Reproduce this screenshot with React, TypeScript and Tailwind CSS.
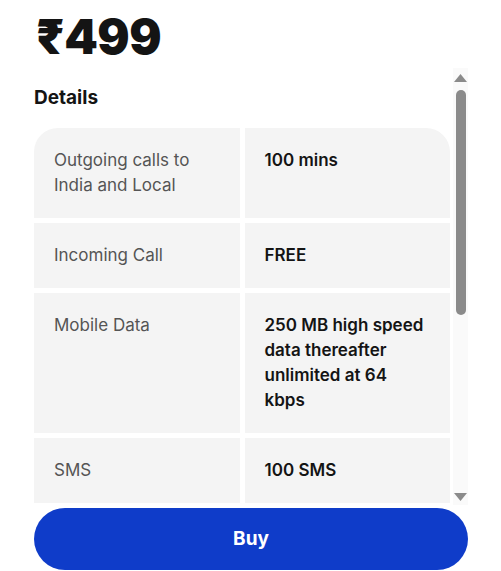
import React from 'react';

type Row = { label: string; value: string };

const ROWS: Row[] = [
  { label: 'Outgoing calls to India and Local', value: '100 mins' },
  { label: 'Incoming Call', value: 'FREE' },
  { label: 'Mobile Data', value: '250 MB high speed data thereafter unlimited at 64 kbps' },
  { label: 'SMS', value: '100 SMS' },
];

const App: React.FC = () => {
  return (
    <div
      className="w-[501px] h-[571px] bg-white flex flex-col pl-[34px] pr-[33px] overflow-hidden"
      style={{ fontFamily: 'Inter, "Noto Sans", "DejaVu Sans", sans-serif' }}
    >
      <div className="mt-[13px] pl-[2px] text-[48px] leading-[48px] font-black text-[#141414] tracking-[-0.5px]">
        ₹499
      </div>

      <div className="mt-[7px] h-[437px] flex">
        <div className="flex-1 overflow-hidden pr-[3px]">
          <div className="pt-[16px]">
            <h3 className="text-[19px] leading-[28px] font-bold text-[#141414] mb-[16px]">Details</h3>
            <div className="grid grid-cols-2 gap-[5px]">
              {ROWS.map((r, i) => (
                <React.Fragment key={r.label}>
                  <div
                    className={`bg-[#f4f4f4] px-[20px] py-[20px] text-[17px] leading-[25px] text-[#555555] ${i === 0 ? 'rounded-tl-[24px]' : ''}`}
                  >
                    {r.label}
                  </div>
                  <div
                    className={`bg-[#f4f4f4] px-[20px] py-[20px] text-[17px] leading-[25px] font-semibold text-[#141414] ${i === 0 ? 'rounded-tr-[24px]' : ''}`}
                  >
                    {r.value}
                  </div>
                </React.Fragment>
              ))}
            </div>
          </div>
        </div>

        {/* scrollbar */}
        <div className="w-[15px] bg-[#fafafa] flex flex-col items-center">
          <svg width="13" height="8" viewBox="0 0 13 8" className="mt-[6px]">
            <path d="M6.5 0 L13 8 L0 8 Z" fill="#8b8b8b" />
          </svg>
          <div className="mt-[8px] w-[10px] h-[225px] rounded-full bg-[#8b8b8b]" />
          <div className="flex-1" />
          <svg width="13" height="8" viewBox="0 0 13 8" className="mb-[4px]">
            <path d="M0 0 L13 0 L6.5 8 Z" fill="#8b8b8b" />
          </svg>
        </div>
      </div>

      <button
        type="button"
        className="mt-[3px] h-[62px] w-full rounded-full bg-[#0f3cc9] text-white text-[19px] font-bold"
      >
        Buy
      </button>
    </div>
  );
};

export default App;
